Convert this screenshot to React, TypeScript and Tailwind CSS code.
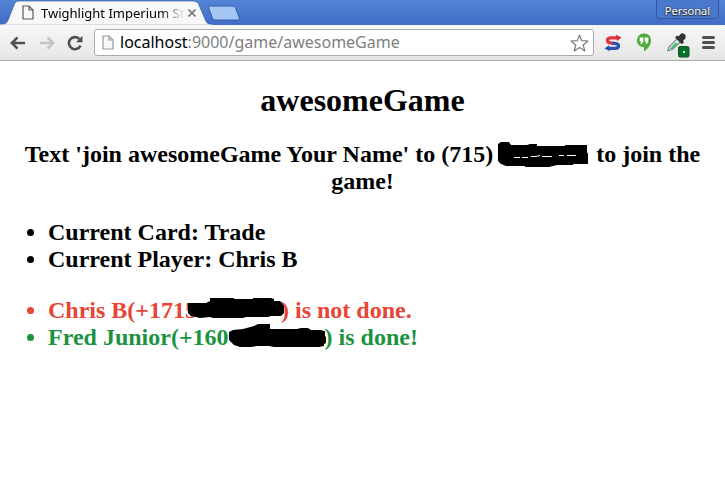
import React from "react";

function PageIcon({ stroke, className }: { stroke: string; className: string }) {
  return (
    <svg viewBox="0 0 12 15" className={className} fill="none" stroke={stroke} aria-hidden="true">
      <path d="M1 1H7L11 5V14H1Z" fill="#f8f8f8" strokeWidth="1.2" />
      <path d="M7 1V5H11" strokeWidth="1.2" />
    </svg>
  );
}

function TabStrip() {
  return (
    <div className="flex h-[25px] items-start bg-linear-to-b from-[#5585d6] to-[#3f6cc7]">
      <div className="relative flex h-[25px] w-[212px] shrink-0 items-center pl-[22px]">
        <svg viewBox="0 0 212 25" className="absolute inset-0 h-[25px] w-[212px]" aria-hidden="true">
          <path d="M0 25V24.500C5 24.500 7 23 8.500 19L14 5C15 2 16.500 1 19 1H192C196 1 198 2 199 5L205 19C206.500 23 208 24.500 212 24.500V25Z" fill="#f8f8f8" stroke="#33589f" strokeWidth=".7" />
          <path d="M0 25H212" stroke="#f6f6f6" />
        </svg>
        <PageIcon stroke="#5a5a5a" className="relative h-[15px] w-3 shrink-0" />
        <span className="relative ml-[7px] w-[146px] whitespace-nowrap bg-linear-to-r from-black from-82% to-transparent to-98% bg-clip-text text-[13px] leading-5 text-transparent">
          Twighlight Imperium St
        </span>
        <button aria-label="Close tab" className="relative flex size-[10px] items-center justify-center">
          <svg viewBox="0 0 10 10" className="size-[10px]" stroke="#707070" strokeWidth="1.600">
            <path d="M1.500 1.500L8.500 8.500M8.500 1.500L1.500 8.500" />
          </svg>
        </button>
      </div>
      <button aria-label="New tab" className="mt-[5px] -ml-1">
        <svg viewBox="0 0 33 16" className="h-4 w-[33px]">
          <path d="M3 1H24C26 1 27 2 27.700 3.500L31 12C31.600 14 31 15 29.500 15H8C6 15 5 14 4.300 12.500L1 4C.4 2 1 1 3 1Z" fill="#a4c6f3" stroke="#345fae" />
        </svg>
      </button>
      <button className="mr-[6px] ml-auto h-[19px] rounded-b border border-t-0 border-[#3257a2] bg-[#4a78cc] px-2 pt-1 text-[11px] leading-[14px] text-white [text-shadow:0_0_2px_#222,0_1px_1px_#222]">
        Personal
      </button>
    </div>
  );
}

function Toolbar() {
  return (
    <div className="flex h-9 items-center border-b border-[#a9a9a9] bg-linear-to-b from-[#f7f7f7] to-[#e6e6e6] px-[10px]">
      <button aria-label="Back">
        <svg viewBox="0 0 16 14" className="h-[14px] w-4" fill="none" stroke="#505050" strokeWidth="2.600">
          <path d="M7.500 1.300L1.900 7L7.500 12.700M2 7H15" />
        </svg>
      </button>
      <button aria-label="Forward" className="ml-[13px]">
        <svg viewBox="0 0 16 14" className="h-[14px] w-4" fill="none" stroke="#c4c4c4" strokeWidth="2.600">
          <path d="M8.500 1.300L14.100 7L8.500 12.700M14 7H1" />
        </svg>
      </button>
      <button aria-label="Reload" className="ml-3">
        <svg viewBox="0 0 16 16" className="size-4" fill="none" stroke="#505050" strokeWidth="2.600">
          <path d="M13.500 10.500A6 6 0 1 1 12.300 4" />
          <path d="M15.500 .8V7.200H9Z" fill="#505050" stroke="none" />
        </svg>
      </button>
      <div className="ml-[11px] flex h-[27px] flex-1 items-center rounded-[3px] border border-[#ababab] bg-white pr-1 pl-[7px]">
        <PageIcon stroke="#999" className="h-[15px] w-3 shrink-0" />
        <label className="relative ml-[6px] h-6 flex-1 text-base leading-[22px]">
          <span aria-hidden="true" className="absolute inset-0 whitespace-nowrap text-[#808080]">
            <span className="text-black">localhost</span>:9000/game/awesomeGame
          </span>
          <input
            aria-label="Address"
            defaultValue="localhost:9000/game/awesomeGame"
            className="relative block h-6 w-full bg-transparent text-transparent outline-none"
          />
        </label>
        <button aria-label="Bookmark this page">
          <svg viewBox="0 0 19 18" className="h-[18px] w-[19px]" fill="none" stroke="#7c7c7c" strokeWidth="1.200" strokeLinejoin="round">
            <path d="M9.500 1L11.700 6.700L18 7L13.200 11L14.800 17L9.500 13.600L4.200 17L5.800 11L1 7L7.300 6.700Z" />
          </svg>
        </button>
      </div>
      <button aria-label="Stylish" className="ml-[10px]">
        <svg viewBox="0 0 18 18" className="size-[18px]" fill="none" strokeWidth="3.200">
          <path d="M13.500 3.800H7C2.500 3.800 2.300 8.200 6.200 8.800L9.500 9.300" stroke="#e2343c" />
          <path d="M12 .8L17.500 3.400L13 7Z" fill="#d92b38" stroke="none" />
          <path d="M8.500 9.100L11.800 9.600C15.700 10.300 15.500 14.400 11 14.400H4.500" stroke="#2d50b0" />
          <path d="M6 17.300L.6 14.400L5 11.200Z" fill="#234fae" stroke="none" />
        </svg>
      </button>
      <button aria-label="Hangouts" className="ml-[14px]">
        <svg viewBox="0 0 16 19" className="h-[19px] w-4">
          <path d="M8 .5C3.800 .5 1 3.500 1 7.500S4 14 8 14.200V18.500C12 16 15 12 15 7.500S12.200 .5 8 .5Z" fill="#50ad3c" />
          <path d="M3.700 4.500H7.300V8.500L6 10.800H4.300L5.300 8.500H3.700ZM8.700 4.500H12.300V8.500L11 10.800H9.300L10.300 8.500H8.700Z" fill="#fff" />
        </svg>
      </button>
      <button aria-label="Color picker" className="mt-[5px] ml-[14px]">
        <svg viewBox="0 0 26 26" className="size-[26px]">
          <path d="M1.800 18.800L2.800 15.400L11.500 6.700L14.500 9.700L6 17.800Z" fill="#dfeee3" stroke="#808080" strokeWidth="1.200" />
          <path d="M3.500 17L9.500 11H12.300L6 17.200Z" fill="#35c36c" />
          <path d="M9 5.500L11 3.500L12.500 4.500L14.500 2C17 -.3 21.700 3.500 19 7L17 8.800L18 10.300L15.800 12.300Z" fill="#333" />
          <rect x="12.500" y="14.500" width="10.500" height="10.500" rx="1.500" fill="#08722d" stroke="#065523" />
          <rect x="17" y="19" width="2" height="2" fill="#b7efc8" />
        </svg>
      </button>
      <button aria-label="Menu" className="ml-[10px]">
        <svg viewBox="0 0 13 13" className="size-[13px]" stroke="#505050" strokeWidth="3" strokeLinecap="round">
          <path d="M1.500 1.500H11.500M1.500 6.500H11.500M1.500 11.500H11.500" />
        </svg>
      </button>
    </div>
  );
}

function Scribble({ d, scratch, width, className }: { d: string; scratch?: string; width: string; className: string }) {
  return (
    <span className={`relative inline-block h-4 ${width}`}>
      <svg viewBox="0 0 100 28" className={`absolute h-7 w-[100px] max-w-none ${className}`} aria-hidden="true">
        <path d={d} fill="#000" />
        {scratch && <path d={scratch} stroke="#fff" strokeWidth="1" fill="none" />}
      </svg>
    </span>
  );
}

export default function App() {
  return (
    <div className="min-h-screen bg-white font-['Noto_Sans',sans-serif]">
      <header>
        <TabStrip />
        <Toolbar />
      </header>
      <main className="px-2 pt-[21px] font-['Liberation_Serif',serif] text-2xl leading-[27px] font-bold text-black">
        <h1 className="text-center text-[32px] leading-[37px]">awesomeGame</h1>
        <h2 className="mt-[22px] text-center">
          Text 'join awesomeGame Your Name' to (715){" "}
          <Scribble
            width="w-[91px]"
            className="-top-[5px] -left-px"
            d="M0 3L3 1H11L13 4H29L32 3H39V5H67V4H89V11L90 13V23H75V24H59L51 26H27V25H8L3 23L0 20Z"
            scratch="M16 16.500H22M24 16.500H30M33 15.500H38L42 14.500M44 15.500H54M61 14.500H66M69 14.500H78"
          />{" "}
          to join the <span>game!</span>
        </h2>
        <ul className="mt-6 list-disc pl-10">
          <li>Current Card: Trade</li>
          <li>Current Player: Chris B</li>
        </ul>
        <ul className="mt-6 list-disc pl-10">
          <li className="text-[#e74535]">
            Chris B(+1715
            <Scribble
              width="w-[84px]"
              className="-top-[5px] -left-[9px]"
              d="M0 6H18L22 4V1H45L47 2H65V1H83L86 2V4H92L94 6L96 9V16L93 19H83L80 20H58L55 21H25L22 20L12 21L8 20L3 19L0 16Z"
            />
            ) is not done.
          </li>
          <li className="text-[#1d9342]">
            Fred Junior(+160
            <Scribble
              width="w-24"
              className="-top-[6px] left-0"
              d="M0 9L4 7L14 6L25 3L29 1H41V6H68L72 5H79L82 7H91L96 8V13L97 14V20L95 21V23L90 24H45L40 23H28L22 24H11L5 22L0 17Z"
            />
            ) is done!
          </li>
        </ul>
      </main>
    </div>
  );
}
